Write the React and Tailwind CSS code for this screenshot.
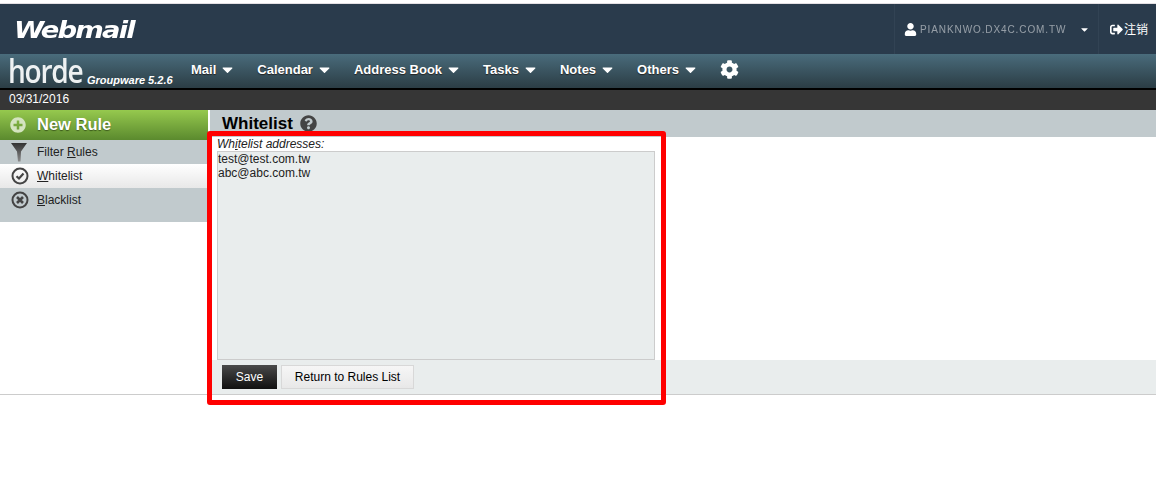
import { FaCaretDown, FaCog, FaPlusCircle, FaQuestionCircle, FaSignOutAlt, FaUser } from 'react-icons/fa'

const navItems = ['Mail', 'Calendar', 'Address Book', 'Tasks', 'Notes', 'Others']

const FunnelIcon = () => (
  <svg width="16" height="20" viewBox="0 0 16 20">
    <defs>
      <linearGradient id="funnel" x1="0" y1="0" x2="0" y2="1">
        <stop offset="0" stopColor="#333" />
        <stop offset="1" stopColor="#8a8a8a" />
      </linearGradient>
    </defs>
    <path d="M0 1h16L10 9.500 9.500 19.500 7 19.500 6 9.500z" fill="url(#funnel)" />
  </svg>
)

const CheckIcon = () => (
  <svg width="18" height="18" viewBox="0 0 18 18" fill="none" stroke="#444">
    <circle cx="9" cy="9" r="7.500" strokeWidth="2" />
    <path d="M5.500 9.200 8 11.500 12.500 6.500" strokeWidth="2.200" />
  </svg>
)

const CrossIcon = () => (
  <svg width="18" height="18" viewBox="0 0 18 18" fill="none" stroke="#444">
    <circle cx="9" cy="9" r="7.500" strokeWidth="2" />
    <path d="M6 6l6 6M12 6l-6 6" strokeWidth="2.600" />
  </svg>
)

const SideItem = ({ icon, first, rest, active, tall }) => (
  <div
    className={`flex items-start pl-[11px] pt-[3px] ${tall ? 'h-[34px]' : 'h-[24px]'} ${
      active ? 'bg-gradient-to-b from-white to-[#e8e8e8]' : 'bg-[#c1cacd]'
    }`}
  >
    <span className="flex h-[18px] w-[26px] shrink-0 items-center">{icon}</span>
    <span className="text-xs leading-[18px] text-[#222]">
      {rest.before}
      <span className="underline">{first}</span>
      {rest.after}
    </span>
  </div>
)

export default function App() {
  return (
    <div className="relative h-[485px] w-[1156px] overflow-hidden bg-white font-['Liberation_Sans',Arial,sans-serif]">
      <div className="h-[3px] bg-white" />
      <div className="h-[1px] bg-[#e4e0e4]" />

      <header className="flex h-[50px] items-center justify-between bg-[#2a3b4c]">
        <span className="mt-[2px] ml-[14px] origin-left scale-x-[1.19] font-['DejaVu_Sans',sans-serif] text-[23px] leading-none font-bold tracking-[-1.5px] text-white italic">
          Webmail
        </span>
        <div className="flex h-full items-center text-white">
          <div className="flex h-full w-[205px] items-center border-x border-[#324354] pl-[9px]">
            <FaUser className="text-[13px]" />
            <span className="ml-[3px] w-[150px] truncate text-[10px] tracking-[0.9px] text-white/50 blur-[0.6px]">
              PIANKNWO.DX4C.COM.TW
            </span>
            <FaCaretDown className="ml-[9px] text-[11px]" />
          </div>
          <div className="flex w-[57px] items-center pl-[11px] text-xs">
            <FaSignOutAlt className="mr-[1px] text-[13px]" />
            <span className="font-['Noto_Sans_CJK_SC',sans-serif]">注销</span>
          </div>
        </div>
      </header>

      <nav className="flex h-[34px] items-center bg-gradient-to-b from-[#4a6c7c] to-[#2b3d45]">
        <div className="flex w-[191px] shrink-0 items-end pl-[8px]">
          <span className="inline-block w-[79px] origin-left scale-x-[0.85] font-['Open_Sans',sans-serif] text-[33px] leading-[30px] font-semibold tracking-[-1.5px] text-[#eef1f2]">
            horde
          </span>
          <span className="text-[11px] leading-[12px] font-bold text-white italic">
            Groupware 5.2.6
          </span>
        </div>
        <div className="flex items-center gap-[21px] pb-[3px]">
          {navItems.map((item) => (
            <div key={item} className="flex items-center text-[13px] font-bold text-white [text-shadow:0_1px_1px_#222]">
              {item}
              <FaCaretDown className="ml-[3px] text-[17px]" />
            </div>
          ))}
          <FaCog className="text-[19px] text-white" />
        </div>
      </nav>

      <div className="h-[2px] bg-black" />
      <div className="h-[20px] bg-[#363636] pl-[9px] text-xs leading-[19px] text-white">03/31/2016</div>

      <div className="flex">
        <aside className="w-[208px] shrink-0">
          <div className="flex h-[30px] items-center bg-gradient-to-b from-[#96c94e] to-[#5b8a2e] pb-[1px] pl-[10px]">
            <FaPlusCircle className="text-[16px] text-[#d4e4c0]" />
            <span className="ml-[11px] text-[16.500px] font-bold text-white [text-shadow:0_1px_1px_#3c5a1c]">New Rule</span>
          </div>
          <SideItem
            icon={<FunnelIcon />}
            first="R"
            rest={{ before: 'Filter ', after: 'ules' }}
            tall={false}
          />
          <SideItem icon={<CheckIcon />} first="W" rest={{ before: '', after: 'hitelist' }} active />
          <SideItem icon={<CrossIcon />} first="B" rest={{ before: '', after: 'lacklist' }} tall />
        </aside>

        <main className="ml-[2px] flex-1">
          <div className="flex h-[27px] items-center bg-[#c1cacd] pl-[12px]">
            <span className="text-[17px] font-bold text-black">Whitelist</span>
            <FaQuestionCircle className="ml-[7px] text-[17px] text-[#444]" />
          </div>
          <div className="pl-[7px]">
            <label className="block h-[14px] text-xs leading-[14px] text-[#222] italic">
              Wh<span className="underline">i</span>telist addresses:
            </label>
            <textarea
              readOnly
              defaultValue={'test@test.com.tw\nabc@abc.com.tw'}
              className="block h-[209px] w-[438px] resize-none border border-[#ccc] bg-[#e9eded] text-xs leading-[14px] text-[#222] outline-none"
            />
          </div>
          <div className="flex h-[34px] items-center gap-[4px] bg-[#e9eded] pl-[12px]">
            <button className="h-[24px] w-[55px] bg-gradient-to-b from-[#4a4a4a] to-[#111] text-xs text-white">Save</button>
            <button className="h-[24px] w-[133px] border border-[#d8d8d8] bg-gradient-to-b from-[#f6f6f6] to-[#e8e8e8] text-xs text-black">
              Return to Rules List
            </button>
          </div>
        </main>
      </div>
      <div className="h-[1px] bg-[#ccc]" />

      <div className="absolute top-[131px] left-[207px] h-[274px] w-[459px] rounded-[3px] border-[5px] border-[#f00]" />
    </div>
  )
}
